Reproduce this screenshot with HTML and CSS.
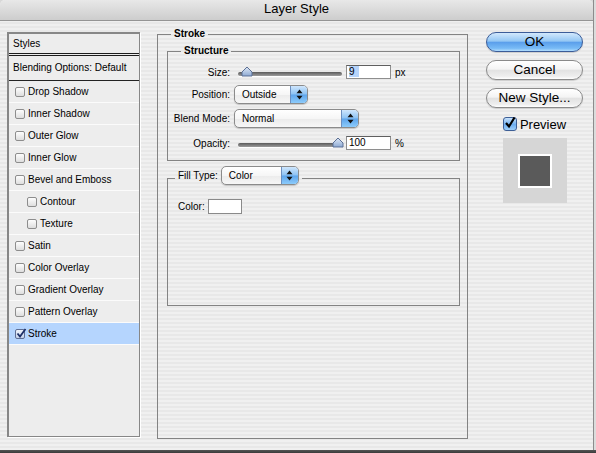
FILE: index.html
```html
<!DOCTYPE html>
<html>
<head>
<meta charset="utf-8">
<title>Layer Style</title>
<link rel="stylesheet" href="styles.css">
</head>
<body>
<div class="screen">
  <div class="top">
    <div class="window">
      <div class="titlebar">Layer Style</div>
      <div class="content">
        <div class="styles-list">
          <div class="list-head">Styles</div>
          <div class="list-blend">Blending Options: Default</div>
          <div class="item"><span class="cb"></span>Drop Shadow</div>
          <div class="item"><span class="cb"></span>Inner Shadow</div>
          <div class="item"><span class="cb"></span>Outer Glow</div>
          <div class="item"><span class="cb"></span>Inner Glow</div>
          <div class="item"><span class="cb"></span>Bevel and Emboss</div>
          <div class="item sub"><span class="cb"></span>Contour</div>
          <div class="item sub"><span class="cb"></span>Texture</div>
          <div class="item"><span class="cb"></span>Satin</div>
          <div class="item"><span class="cb"></span>Color Overlay</div>
          <div class="item"><span class="cb"></span>Gradient Overlay</div>
          <div class="item"><span class="cb"></span>Pattern Overlay</div>
          <div class="item selected"><span class="cb checked"><svg class="check-small" viewBox="0 0 12 12" width="12" height="12"><path d="M2.5 5.5 L5 8.5 L10.5 1" fill="none" stroke="#1d2f66" stroke-width="1.8"/></svg></span>Stroke</div>
        </div>

        <fieldset class="group outer">
          <legend>Stroke</legend>
          <fieldset class="group structure">
            <legend>Structure</legend>
            <div class="form">
              <label>Size:</label>
              <div class="ctrl">
                <div class="slider"><div class="track"></div><svg class="thumb thumb-size" viewBox="0 0 12 11" width="12" height="11"><defs><linearGradient id="tg1" x1="0" y1="0" x2="0" y2="1"><stop offset="0" stop-color="#dfe9f7"/><stop offset="1" stop-color="#8eaad3"/></linearGradient></defs><path d="M1 10 L1 6 L6 1 L11 6 L11 10 Z" fill="url(#tg1)" stroke="#5b6f94"/></svg></div>
                <div class="field"><span class="sel">9</span></div>
                <span class="unit">px</span>
              </div>
              <label>Position:</label>
              <div class="ctrl">
                <div class="popup pos"><span class="popup-text">Outside</span><span class="popup-arrows"><svg viewBox="0 0 7 11" width="7" height="11"><path d="M3.5 0.5 L6.5 4.3 L0.5 4.3 Z M0.5 6.7 L6.5 6.7 L3.5 10.5 Z" fill="#111"/></svg></span></div>
              </div>
              <label>Blend Mode:</label>
              <div class="ctrl">
                <div class="popup blend"><span class="popup-text">Normal</span><span class="popup-arrows"><svg viewBox="0 0 7 11" width="7" height="11"><path d="M3.5 0.5 L6.5 4.3 L0.5 4.3 Z M0.5 6.7 L6.5 6.7 L3.5 10.5 Z" fill="#111"/></svg></span></div>
              </div>
              <label>Opacity:</label>
              <div class="ctrl">
                <div class="slider"><div class="track"></div><svg class="thumb thumb-opacity" viewBox="0 0 12 11" width="12" height="11"><defs><linearGradient id="tg2" x1="0" y1="0" x2="0" y2="1"><stop offset="0" stop-color="#dfe9f7"/><stop offset="1" stop-color="#8eaad3"/></linearGradient></defs><path d="M1 10 L1 6 L6 1 L11 6 L11 10 Z" fill="url(#tg2)" stroke="#5b6f94"/></svg></div>
                <div class="field">100</div>
                <span class="unit">%</span>
              </div>
            </div>
          </fieldset>
          <fieldset class="group fill">
            <legend><span class="fill-label">Fill Type:</span><span class="popup filltype"><span class="popup-text">Color</span><span class="popup-arrows"><svg viewBox="0 0 7 11" width="7" height="11"><path d="M3.5 0.5 L6.5 4.3 L0.5 4.3 Z M0.5 6.7 L6.5 6.7 L3.5 10.5 Z" fill="#111"/></svg></span></span></legend>
            <div class="fill-body">
              <div class="color-row"><span>Color:</span><span class="swatch"></span></div>
            </div>
          </fieldset>
        </fieldset>

        <div class="actions">
          <button class="btn primary">OK</button>
          <button class="btn">Cancel</button>
          <button class="btn">New Style...</button>
          <div class="preview-row"><span class="aqua-cb"><svg viewBox="0 0 14 14" width="14" height="14"><path d="M3 7 L6 10.5 L11.5 1.5" fill="none" stroke="#000" stroke-width="2.2"/></svg></span><span>Preview</span></div>
          <div class="preview-box"><div class="preview-square"></div></div>
        </div>
      </div>
    </div>
    <div class="edge"></div>
  </div>
  <div class="bottom-strip"></div>
</div>
</body>
</html>
```

FILE: styles.css
```css
* { box-sizing: border-box; }
html, body { margin: 0; padding: 0; }
body {
  font-family: "Liberation Sans", Arial, sans-serif;
  font-size: 10px;
  color: #000;
  background: #d8d8d8;
}
.screen { width: 596px; height: 453px; display: flex; flex-direction: column; overflow: hidden; }
.top { display: flex; height: 450px; }
.window {
  width: 593px;
  height: 450px;
  display: flex;
  flex-direction: column;
  background: repeating-linear-gradient(to bottom, #f0f0f0 0 2px, #e8e8e8 2px 4px);
  border-radius: 5px 5px 0 0;
  overflow: hidden;
}
.edge { flex: 1; background: #dcdcdc; border-left: 1px solid #8c8c8c; }
.bottom-strip { height: 3px; background: linear-gradient(#555, #3a3a3a); }

.titlebar {
  height: 21px;
  flex: none;
  background: linear-gradient(#e8e8e8, #cdcdcd);
  border-bottom: 1px solid #959595;
  text-align: center;
  font-size: 13px;
  line-height: 18px;
}
.content { flex: 1; display: flex; padding-left: 7px; }

/* styles list */
.styles-list {
  width: 133px;
  margin: 11px 0 13px;
  border: 2px solid #878787;
  border-right-width: 1px;
  border-bottom-width: 1px;
  background: #ededed;
  box-shadow: 1px 1px 0 #fff;
}
.list-head {
  height: 22px;
  line-height: 19px;
  padding-left: 4px;
  border-bottom: 3px double #1c1c1c;
}
.list-blend {
  height: 25px;
  line-height: 24px;
  padding-left: 4px;
  border-bottom: 1px solid #222;
}
.item {
  height: 22px;
  line-height: 21px;
  border-bottom: 1px solid #fbfbfb;
  display: flex;
  align-items: center;
  padding-left: 6px;
  gap: 3px;
}
.item.sub { padding-left: 18px; }
.item.selected { background: #b5d5fe; }
.cb {
  width: 10px;
  height: 10px;
  flex: none;
  border: 1px solid #8d8d8d;
  border-radius: 2px;
  background: linear-gradient(#fdfdfd, #dedede);
  position: relative;
}
.cb.checked { border-color: #5f6f95; background: linear-gradient(#eef3fb, #c4d2ea); }
.check-small { position: absolute; left: -1px; top: -2px; }

/* group boxes */
fieldset.group { margin: 0; border: 1px solid #838383; min-width: 0; }
legend { font-weight: bold; line-height: 12px; padding: 0 3px; }
fieldset.outer {
  width: 311px;
  margin: 7px 0 11px 17px;
  padding: 0 7px 0 9px;
}
.outer > legend { margin-left: 4px; }
fieldset.structure { margin-top: 5px; padding: 4px 0 5px; }
.structure > legend { margin-left: 13px; }
fieldset.fill { margin-top: 5px; padding: 0; }
.fill > legend {
  margin-left: 7px;
  padding: 0 3px 6px;
  font-weight: normal;
  line-height: 19px;
  display: flex;
  align-items: center;
}

.form {
  display: grid;
  grid-template-columns: 62px auto;
  grid-template-rows: 22px 22px 26px 24px;
  column-gap: 4px;
  align-items: center;
}
.form label { text-align: right; }
.ctrl { display: flex; align-items: center; }

.slider { position: relative; width: 104px; height: 12px; margin-left: 4px; display: flex; align-items: flex-end; }
.track {
  width: 100%;
  height: 4px;
  margin-bottom: 2px;
  border-radius: 2px;
  background: linear-gradient(#5a5a5a, #9d9d9d);
  box-shadow: 0 1px 0 #fff;
}
.thumb { position: absolute; top: 0; }
.thumb-size { left: 3px; }
.thumb-opacity { left: 94px; }

.field {
  width: 45px;
  height: 14px;
  margin-left: 4px;
  background: #fff;
  border: 1px solid #8e8e8e;
  border-top-color: #5f5f5f;
  line-height: 12px;
  padding-left: 2px;
}
.sel { background: #b6d4fb; padding-right: 4px; }
.unit { margin-left: 4px; }

/* popups */
.popup {
  display: flex;
  height: 19px;
  border: 1px solid #8b8b8b;
  border-radius: 5px;
  overflow: hidden;
  background: linear-gradient(#ffffff, #f6f6f6 50%, #ebebeb 51%, #f7f7f7);
  box-shadow: 0 1px 1px rgba(0,0,0,0.18);
}
.popup-text { flex: 1; padding-left: 7px; line-height: 17px; font-weight: normal; }
.popup-arrows {
  width: 17px;
  flex: none;
  display: flex;
  align-items: center;
  justify-content: center;
  border-left: 1px solid #6c8fc0;
  background: linear-gradient(#cfe6fc, #8cc2f4 48%, #5ea5ec 52%, #8ccbfb);
}
.pos { width: 74px; }
.blend { width: 125px; }
.filltype { width: 78px; margin-left: 3px; }

.fill-body { height: 114px; padding: 8px 0 0 10px; }
.color-row { display: flex; align-items: center; gap: 3px; height: 15px; }
.swatch { width: 34px; height: 15px; background: #fff; border: 1px solid #8a8a8a; }

/* right column */
.actions {
  width: 97px;
  margin: 11px 0 0 18px;
  display: flex;
  flex-direction: column;
  align-items: center;
}
.btn {
  width: 97px;
  height: 20px;
  margin: 0 0 8px;
  padding: 0;
  font-family: "Liberation Sans", Arial, sans-serif;
  font-size: 13.5px;
  line-height: 18px;
  color: #000;
  border: 1px solid #8a8a8a;
  border-radius: 10px;
  background: linear-gradient(#ffffff, #f4f4f4 45%, #e2e2e2 52%, #eeeeee 85%, #ffffff);
  box-shadow: 0 1px 1px rgba(0,0,0,0.15);
}
.btn.primary {
  border-color: #3b5c98;
  background: linear-gradient(#d2e8fc, #94c7f4 45%, #5b9feb 52%, #78bbf6 85%, #b2ddfd);
}
.preview-row { display: flex; align-items: center; gap: 3px; font-size: 13px; margin-top: 1px; height: 14px; }
.aqua-cb {
  width: 14px;
  height: 14px;
  border: 1px solid #3d5f96;
  border-radius: 3px;
  background: linear-gradient(#c9e2fb, #6eaef0 55%, #9fd0fb);
  position: relative;
}
.aqua-cb svg { position: absolute; left: -1px; top: -2px; }
.preview-box {
  width: 64px;
  height: 65px;
  margin-top: 7px;
  background: #d6d6d6;
  display: flex;
  align-items: center;
  justify-content: center;
}
.preview-square { width: 34px; height: 34px; background: #5a5a5a; border: 2px solid #fff; }
```
